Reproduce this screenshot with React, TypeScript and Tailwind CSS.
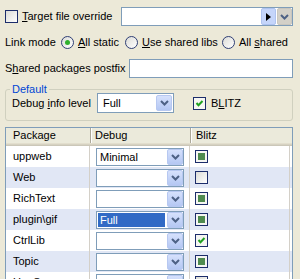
import React from 'react';

type CheckState = 'off' | 'on' | 'mixed';

const Chevron = ({ color = '#4D6185' }: { color?: string }) => (
  <svg width="9" height="6" viewBox="0 0 9 6">
    <polyline points="1,1 4.5,4.5 8,1" fill="none" stroke={color} strokeWidth="2" />
  </svg>
);

const DropBtn = ({ gray }: { gray?: boolean }) => (
  <div
    className={
      gray
        ? 'w-[15px] h-full flex items-center justify-center bg-[#D3D0C8] border border-[#C9C6BE] rounded-[2px]'
        : 'w-[16px] h-full flex items-center justify-center bg-gradient-to-b from-[#D6E1FC] to-[#B4C7F3] border border-[#B7C8F1] rounded-[2px]'
    }
  >
    <Chevron />
  </div>
);

const Check = ({ state }: { state: CheckState }) => (
  <span
    className={
      'w-[13px] h-[13px] shrink-0 flex items-center justify-center border border-[#1C2D6B] ' +
      (state === 'off' ? 'bg-gradient-to-br from-[#DCDCD7] to-white' : 'bg-[#F6F6F3]')
    }
  >
    {state === 'mixed' && <span className="w-[7px] h-[7px] bg-[#4F8B4F]" />}
    {state === 'on' && (
      <svg width="11" height="11" viewBox="0 0 11 11">
        <polyline points="2.5,5 4.5,7.2 8.5,3" fill="none" stroke="#21A121" strokeWidth="2" />
      </svg>
    )}
  </span>
);

const Radio = ({ on }: { on?: boolean }) => (
  <span className="w-[13px] h-[13px] shrink-0 rounded-full border border-[#2F3F75] bg-gradient-to-br from-[#DCDCD7] to-white flex items-center justify-center">
    {on && <span className="w-[5px] h-[5px] rounded-full bg-[#2FB02D]" />}
  </span>
);

const rows: { name: string; debug: string; blitz: CheckState; sel?: boolean }[] = [
  { name: 'uppweb', debug: 'Minimal', blitz: 'mixed' },
  { name: 'Web', debug: '', blitz: 'off' },
  { name: 'RichText', debug: '', blitz: 'mixed' },
  { name: 'plugin\\gif', debug: 'Full', blitz: 'mixed', sel: true },
  { name: 'CtrlLib', debug: '', blitz: 'on' },
  { name: 'Topic', debug: '', blitz: 'mixed' },
  { name: 'UppSrc', debug: '', blitz: 'off' },
];

export default function App() {
  return (
    <div className="w-[300px] h-[279px] overflow-hidden bg-[#ECE9D8] text-[11px] leading-[13px] text-black font-['Liberation_Sans',Arial,sans-serif]">
      {/* target override */}
      <div className="flex items-center h-[19px] mt-[7px] pl-[5px] pr-[7px]">
        <Check state="off" />
        <span className="ml-[4px]">
          <u>T</u>arget file override
        </span>
        <div className="ml-auto w-[172px] h-[19px] border border-[#7F9DB9] bg-white flex justify-end">
          <div className="w-[15px] h-full flex items-center justify-center bg-[#C5D5FA] border border-[#AFC3F0] rounded-[2px] mr-[1px]">
            <svg width="5" height="8" viewBox="0 0 5 8">
              <polygon points="0,0 5,4 0,8" fill="#000" />
            </svg>
          </div>
          <DropBtn gray />
        </div>
      </div>

      {/* link mode */}
      <div className="flex items-center h-[19px] mt-[7px] pl-[5px]">
        <span className="w-[56px]">Link mode</span>
        <div className="w-[64px] flex items-center">
          <Radio on />
          <span className="ml-[4px]">
            <u>A</u>ll static
          </span>
        </div>
        <div className="w-[97px] flex items-center">
          <Radio />
          <span className="ml-[4px]">
            <u>U</u>se shared libs
          </span>
        </div>
        <div className="flex items-center">
          <Radio />
          <span className="ml-[4px]">
            All <u>s</u>hared
          </span>
        </div>
      </div>

      {/* postfix */}
      <div className="flex items-center h-[19px] mt-[7px] pl-[5px] pr-[7px]">
        <span>
          S<u>h</u>ared packages postfix
        </span>
        <div className="ml-auto w-[164px] h-[19px] border border-[#7F9DB9] bg-white" />
      </div>

      {/* default group */}
      <fieldset className="mt-[7px] ml-[5px] w-[288px] border border-[#D0D0BF] rounded-[3px] px-[6px] pb-[7px]">
        <legend className="-ml-[2px] px-[2px] leading-[8px] text-[#0046D5]">Default</legend>
        <div className="flex items-center h-[20px]">
          <span className="w-[85px]">
            Debug <u>i</u>nfo level
          </span>
          <div className="w-[77px] h-[20px] border border-[#7F9DB9] bg-white flex p-[1px]">
            <span className="flex-1 flex items-center pl-[4px]">Full</span>
            <DropBtn />
          </div>
          <span className="ml-[19px]">
            <Check state="on" />
          </span>
          <span className="ml-[5px]">
            B<u>L</u>ITZ
          </span>
        </div>
      </fieldset>

      {/* package list */}
      <div className="mt-[6px] ml-[5px] w-[288px] h-[200px] border border-[#7F9DB9] bg-white">
        <div className="grid grid-cols-[84px_100px_100px] h-[15px] bg-[#EBEADB]">
          <div className="pl-[7px] flex items-center">Package</div>
          <div className="pl-[4px] flex items-center border-l border-[#ACA899] shadow-[inset_1px_0_0_#fff]">Debug</div>
          <div className="pl-[5px] flex items-center border-l border-[#ACA899] shadow-[inset_1px_0_0_#fff]">Blitz</div>
        </div>
        <div className="h-[1px] bg-[#E2DECD]" />
        <div className="h-[1px] bg-[#D6D2C2]" />
        <div className="h-[1px] bg-[#CBC7B8]" />
        {rows.map((r, i) => (
          <div
            key={r.name}
            className={'grid grid-cols-[84px_100px_100px] h-[21px] ' + (i % 2 ? 'bg-[#E1E7F5]' : 'bg-white')}
          >
            <div className="pl-[7px] flex items-center border-r border-[#D4D0C8]">{r.name}</div>
            <div className="pl-[6px] pt-[2px] border-r border-[#D4D0C8]">
              <div className="w-[88px] h-[18px] border border-[#7F9DB9] bg-white flex">
                {r.sel ? (
                  <div className="flex-1 p-[1px] pr-[2px]">
                    <div className="h-full bg-[#316AC5] text-white pl-[2px] flex items-center">{r.debug}</div>
                  </div>
                ) : (
                  <div className="flex-1 pl-[3px] flex items-center">{r.debug}</div>
                )}
                <DropBtn />
              </div>
            </div>
            <div className="pl-[5px] flex items-center border-r border-[#D4D0C8]">
              <Check state={r.blitz} />
            </div>
          </div>
        ))}
      </div>
    </div>
  );
}
